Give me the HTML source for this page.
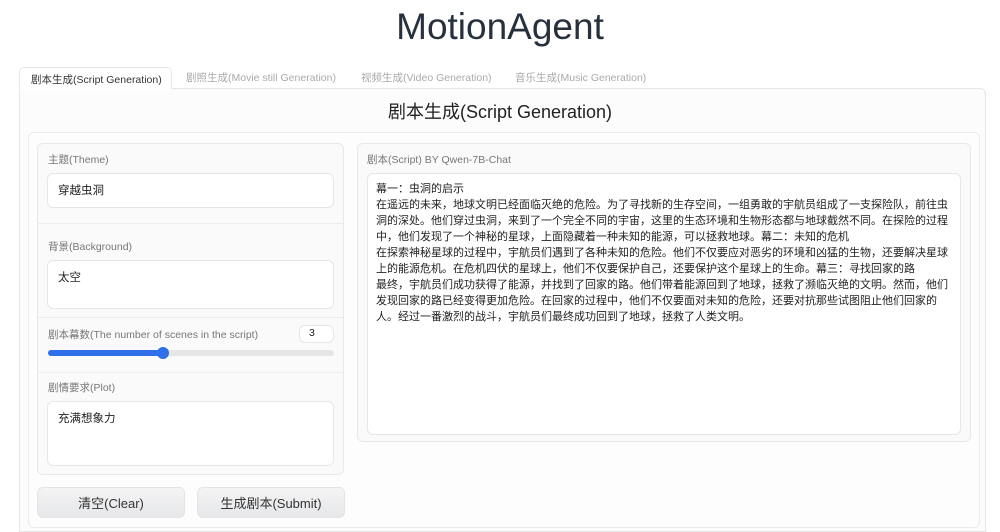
<!DOCTYPE html>
<html><head><meta charset="utf-8"><style>
*{margin:0;padding:0;box-sizing:border-box}
body{width:1000px;height:531px;background:#fff;font-family:"Liberation Sans","Noto Sans CJK SC",sans-serif;position:relative;overflow:hidden;color:#333}
.a{position:absolute}
.title{left:0;width:1000px;top:6px;text-align:center;font-size:37px;color:#27313d}
.tab{top:70px;font-size:10.5px;color:#aaa;height:19px;line-height:17px}
.act{left:19px;width:153px;top:67px;height:22px;border:1px solid #e6e6e6;border-bottom:1px solid #fff;border-radius:5px 5px 0 0;background:#fff;color:#333;padding:4px 0 0 11px;font-size:10.5px;z-index:2}
.panel{left:19px;top:88px;width:967px;height:444px;border:1px solid #e6e6e6;border-radius:0 6px 0 0;background:#fcfcfc}
.h{left:0;width:1000px;top:98px;text-align:center;font-size:18px;color:#222}
.block{left:28px;top:132px;width:952px;height:396px;border:1px solid #ececec;border-radius:6px;background:#fdfdfd}
.box{border:1px solid #e8e8e8;border-radius:6px;background:#fafafa}
.lbl{font-size:10.5px;color:#777}
.inp{border:1px solid #e6e6e6;border-radius:6px;background:#fff;font-size:11.5px;color:#222;padding:8px 10px}
.btn{top:487px;height:31px;border-radius:6px;background:linear-gradient(#f4f4f5,#e6e7e9);font-size:13px;color:#333;text-align:center;line-height:31px;border:1px solid #e4e4e4}
.txt{font-size:11px;line-height:16px;color:#222;padding:7px 10px 7px 8px}
</style></head><body>
<div class="a title">MotionAgent</div>
<div class="a act">剧本生成(Script Generation)</div>
<div class="a tab" style="left:186px">剧照生成(Movie still Generation)</div>
<div class="a tab" style="left:361px">视频生成(Video Generation)</div>
<div class="a tab" style="left:515px">音乐生成(Music Generation)</div>
<div class="a panel"></div>
<div class="a h">剧本生成(Script Generation)</div>
<div class="a block"></div>
<div class="a box" style="left:37px;top:143px;width:307px;height:332px"></div>
<div class="a lbl" style="left:48px;top:152px">主题(Theme)</div>
<div class="a inp" style="left:47px;top:173px;width:287px;height:35px">穿越虫洞</div>
<div class="a" style="left:37px;top:223px;width:307px;border-top:1px solid #ececec"></div>
<div class="a lbl" style="left:48px;top:239px">背景(Background)</div>
<div class="a inp" style="left:47px;top:260px;width:287px;height:49px">太空</div>
<div class="a" style="left:37px;top:317px;width:307px;border-top:1px solid #ececec"></div>
<div class="a lbl" style="left:48px;top:327px">剧本幕数(The number of scenes in the script)</div>
<div class="a inp" style="left:299px;top:325px;width:35px;height:18px;padding:1px 0 0 9px;font-size:10.5px">3</div>
<div class="a" style="left:48px;top:350px;width:286px;height:6px;border-radius:3px;background:#e6e6e6"></div>
<div class="a" style="left:48px;top:350px;width:116px;height:6px;border-radius:3px;background:#2f6fea"></div>
<div class="a" style="left:157px;top:347px;width:12px;height:12px;border-radius:50%;background:#2f6fea"></div>
<div class="a" style="left:37px;top:372px;width:307px;border-top:1px solid #ececec"></div>
<div class="a lbl" style="left:48px;top:380px">剧情要求(Plot)</div>
<div class="a inp" style="left:47px;top:401px;width:287px;height:65px">充满想象力</div>
<div class="a btn" style="left:37px;width:148px">清空(Clear)</div>
<div class="a btn" style="left:197px;width:148px">生成剧本(Submit)</div>
<div class="a box" style="left:357px;top:143px;width:614px;height:299px"></div>
<div class="a lbl" style="left:367px;top:152px">剧本(Script) BY Qwen-7B-Chat</div>
<div class="a inp txt" style="left:367px;top:173px;width:594px;height:262px">幕一：虫洞的启示<br>在遥远的未来，地球文明已经面临灭绝的危险。为了寻找新的生存空间，一组勇敢的宇航员组成了一支探险队，前往虫洞的深处。他们穿过虫洞，来到了一个完全不同的宇宙，这里的生态环境和生物形态都与地球截然不同。在探险的过程中，他们发现了一个神秘的星球，上面隐藏着一种未知的能源，可以拯救地球。幕二：未知的危机<br>在探索神秘星球的过程中，宇航员们遇到了各种未知的危险。他们不仅要应对恶劣的环境和凶猛的生物，还要解决星球上的能源危机。在危机四伏的星球上，他们不仅要保护自己，还要保护这个星球上的生命。幕三：寻找回家的路<br>最终，宇航员们成功获得了能源，并找到了回家的路。他们带着能源回到了地球，拯救了濒临灭绝的文明。然而，他们发现回家的路已经变得更加危险。在回家的过程中，他们不仅要面对未知的危险，还要对抗那些试图阻止他们回家的人。经过一番激烈的战斗，宇航员们最终成功回到了地球，拯救了人类文明。</div>
</body></html>
